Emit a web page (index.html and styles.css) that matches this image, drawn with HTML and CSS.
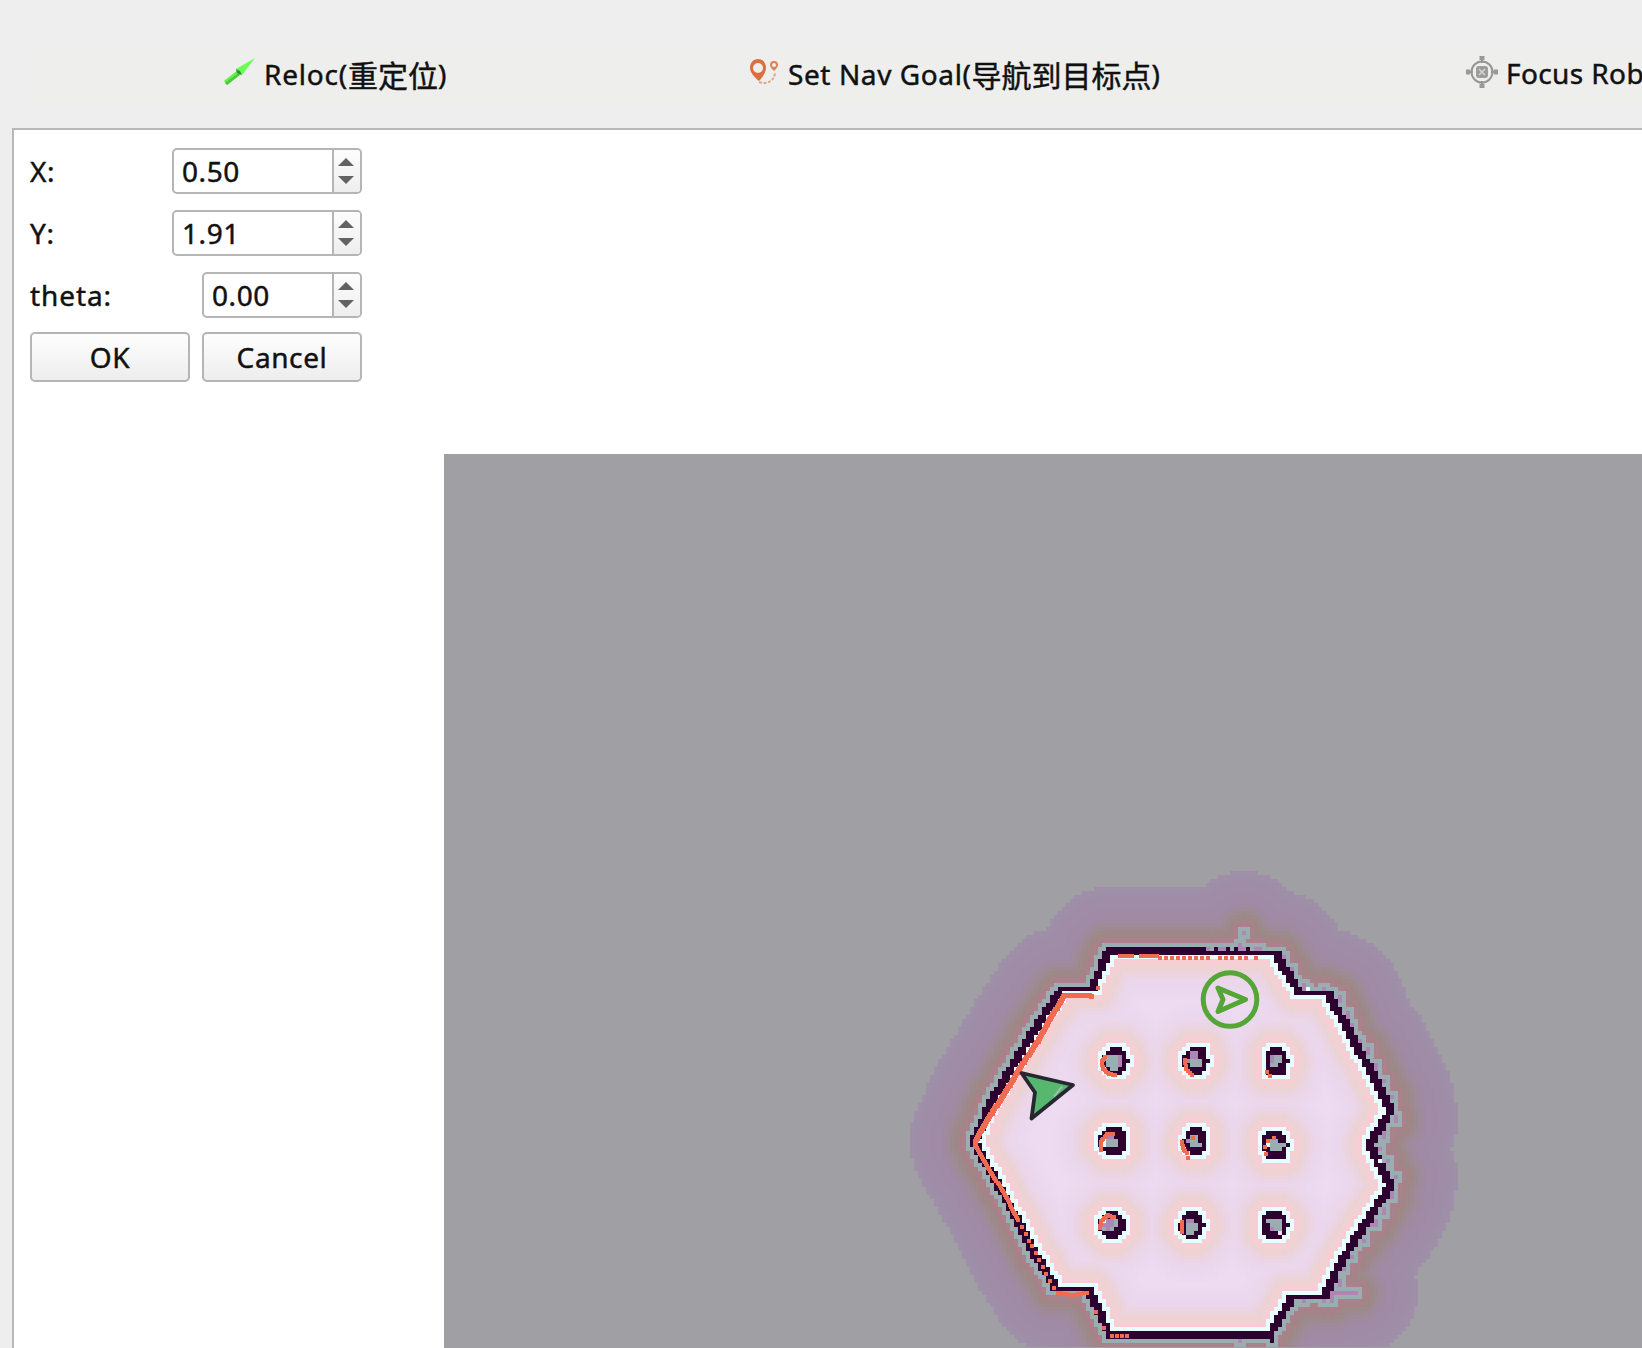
FILE: index.html
```html
<!DOCTYPE html>
<html lang="en">
<head>
<meta charset="utf-8">
<title>Map view</title>
<link rel="stylesheet" href="styles.css">
</head>
<body>
<div class="window">
  <header class="toolbar">
    <button class="tool reloc">
      <svg class="icon" viewBox="0 0 32 32"><path d="M1 23 15 12 18 16 4 27Z" fill="#61ed4c"/><path d="M2 25 17 14 18 16 4 27Z" fill="#4acb3c"/><path d="M13 11 32 0 19 17Z" fill="#6aff54"/><path d="m13 11 4 2 2 4-5-2Z" fill="#368c2c"/></svg>
      <span class="label l1">Reloc(</span><span class="cjk">重定位</span><span class="label">)</span>
    </button>
    <button class="tool goal">
      <svg class="icon" viewBox="0 0 32 32"><path fill-rule="evenodd" d="M9 1C4 1 1 5 1 10c0 4 4 9 9 13 4-4 7-9 7-13 0-5-3-9-8-9Zm0 4a5 5 0 1 1 0 10A5 5 0 0 1 9 5Z" fill="#d9703f"/><path fill-rule="evenodd" d="M25 3a4 4 0 0 0-4 4c0 2 2 4 4 6 2-2 4-4 4-6a4 4 0 0 0-4-4Zm0 2a2 2 0 1 1 0 4 2 2 0 0 1 0-4Z" fill="#dc8057"/><path d="M10 24c9 3 16-2 16-10" fill="none" stroke="#e2a58c" stroke-width="2" stroke-dasharray="3 1.5"/></svg>
      <span class="label l2">Set Nav Goal(</span><span class="cjk">导航到目标点</span><span class="label">)</span>
    </button>
    <button class="tool focus">
      <svg class="icon" viewBox="0 0 32 32"><g fill="none" stroke="#969696" stroke-width="2"><circle cx="16" cy="16" r="10.5"/><path d="M16 1v6M16 25v6M1 16h6M25 16h6"/></g><path d="M13.500 0h5v4h-5zM13.500 28h5v4h-5zM0 13.500h4v5H0zM28 13.500h4v5h-4z" fill="#999"/><rect x="10" y="10" width="12" height="12" rx="3" fill="#9c9c9c"/><path d="m13 13 6 6m0-6-6 6" stroke="#d5d5d5" stroke-width="1.500"/></svg>
      <span class="label l3">Focus Rob</span>
    </button>
  </header>
  <main class="view">
    <form class="pose">
      <div class="row"><span class="name">X:</span><div class="spin"><span class="value">0.50</span><span class="steps"><i class="up"></i><i class="down"></i></span></div></div>
      <div class="row"><span class="name">Y:</span><div class="spin"><span class="value">1.91</span><span class="steps"><i class="up"></i><i class="down"></i></span></div></div>
      <div class="row"><span class="name th">theta:</span><div class="spin short"><span class="value">0.00</span><span class="steps"><i class="up"></i><i class="down"></i></span></div></div>
      <div class="buttons"><button type="button" class="btn ok">OK</button><button type="button" class="btn cancel">Cancel</button></div>
    </form>
    <div class="map">
      <canvas id="costmap" class="costmap" width="560" height="480"></canvas>
      <svg class="markers" viewBox="444 454 1198 894">
        <path d="M1021.500 1073 1073 1085 1031.500 1118.500 1035 1092.500Z" fill="#55b86e" stroke="#272731" stroke-width="3.800" stroke-linejoin="round"/>
        <path d="M1054 1096.500 1062 1086.500" stroke="#aeb7b7" stroke-width="2"/>
        <circle cx="1230" cy="999.500" r="26.800" fill="none" stroke="#54a636" stroke-width="5"/>
        <path d="M1218 988 1245.500 999.500 1218 1011.500 1223 999.500Z" fill="none" stroke="#54a636" stroke-width="5" stroke-linejoin="round"/>
      </svg>
    </div>
  </main>
</div>
<script src="costmap.js"></script>
</body>
</html>
```
FILE: styles.css
```css
* { box-sizing: border-box; }
body { margin: 0; background: #eeeeee; color: #111; font-family: "Noto Sans", "Noto Sans CJK SC", sans-serif; font-size: 28px; letter-spacing: .6px; -webkit-text-stroke: .45px #111; }
button { font: inherit; color: inherit; letter-spacing: inherit; border: 0; padding: 0; background: none; }
.window { width: 1642px; height: 1348px; overflow: hidden; display: flex; flex-direction: column; }
.toolbar { flex: none; height: 128px; padding: 48px 0 28px 30px; display: flex; }
.tool { flex: none; height: 52px; display: flex; align-items: center; background: #eeeeec; white-space: pre; line-height: 52px; }
.reloc { width: 580px; padding-left: 193px; }
.goal { width: 660px; padding-left: 139px; }
.focus { width: 600px; padding-left: 196px; }
.focus .icon { margin-right: 8px; margin-top: -4px; }
.focus .label { margin-top: -3px; letter-spacing: .4px; }
.icon { width: 32px; height: 32px; flex: none; margin-right: 7px; }
.reloc .icon { margin-right: 9px; }
.l1 { letter-spacing: .8px; }
.cjk { font-family: "Noto Sans CJK SC", sans-serif; font-size: 30px; letter-spacing: 0; }
.view { flex: 1; min-height: 0; margin-left: 12px; border: solid #b8b8b8; border-width: 2px 0 0 2px; background: #fff; display: flex; flex-direction: column; }
.pose { flex: none; height: 324px; width: 348px; padding: 18px 0 0 16px; display: flex; flex-direction: column; }
.row { height: 46px; margin-bottom: 16px; display: flex; align-items: center; justify-content: space-between; }
.row:nth-child(3) { margin-bottom: 14px; }
.spin { width: 190px; height: 46px; border: 2px solid #b5b5b5; border-radius: 5px; display: flex; background: #fff; overflow: hidden; }
.short { width: 160px; }
.value { flex: 1; padding-left: 8px; line-height: 42px; }
.steps { width: 28px; border-left: 2px solid #b5b5b5; background: linear-gradient(#fdfdfd, #eee); display: flex; flex-direction: column; align-items: center; gap: 10px; padding: 8px 2px 0 0; }
.up, .down { width: 0; height: 0; border: 8px solid transparent; border-top: 0; border-bottom: 8px solid #626262; }
.down { border-bottom: 0; border-top: 8px solid #626262; }
.name.th { letter-spacing: .9px; }
.buttons { display: flex; gap: 12px; }
.btn { width: 160px; height: 50px; border: 2px solid #b5b5b5; border-radius: 5px; background: linear-gradient(#fefefe, #ededed); line-height: 44px; }
.map { flex: none; position: relative; width: 1198px; height: 894px; margin-left: 430px; background: #a0a0a4; overflow: hidden; }
.costmap { position: absolute; left: 462px; top: 413px; image-rendering: pixelated; }
.markers { position: absolute; left: 0; top: 0; width: 1198px; height: 894px; }
```
FILE: costmap.js
```js
// Costmap layer: walls and pillars on a 4px grid, inflated by distance.
const CELL = 4, COLS = 140, ROWS = 120, OX = 907, OY = 868;
const ctx = document.getElementById('costmap').getContext('2d');
const outline = [[1111,954],[1278,954],[1302,993],[1332,996],[1347,1023],[1360,1047],[1378,1080],[1394,1111],[1373,1145],[1394,1187],[1371,1220],[1338,1273],[1329,1296],[1296,1296],[1273,1336],[1112,1334],[1092,1292],[1060,1291],[1039,1257],[1002,1187],[977,1143],[992,1109],[999,1095],[1029,1045],[1049,1013],[1064,991],[1094,991]];
const grid = new Array(COLS * ROWS).fill('');
const cx = x => Math.floor((x - OX) / CELL), cy = y => Math.floor((y - OY) / CELL);
const put = (c, r, v) => { if (c >= 0 && c < COLS && r >= 0 && r < ROWS) grid[r * COLS + c] = v; };

function line(a, b, v, thick) {
  const n = Math.ceil(Math.hypot(b[0] - a[0], b[1] - a[1]));
  for (let i = 0; i <= n; i++) {
    const c = cx(a[0] + (b[0] - a[0]) * i / n), r = cy(a[1] + (b[1] - a[1]) * i / n);
    put(c, r, v);
    if (thick) put(c - 1, r, v);
  }
}
// scanned specks on the outer side of the right-hand walls
for (let i = 1; i < 13; i++) {
  const a = outline[i], b = outline[i + 1];
  const n = Math.hypot(b[0] - a[0], b[1] - a[1]);
  const ox = (b[1] - a[1]) / n * 5, oy = -(b[0] - a[0]) / n * 5;
  for (let t = 6; t < n; t += 17) {
    const x = a[0] + (b[0] - a[0]) * t / n + ox, y = a[1] + (b[1] - a[1]) * t / n + oy;
    put(cx(x), cy(y), 'p');
    if (i % 2) put(cx(x), cy(y) + 1, 'p');
  }
}
for (const [x, y] of [[1245,935],[1240,946],[1239,1342]]) put(cx(x), cy(y), 'p');
line([1334,1295], [1357,1295], 'p');
outline.forEach((a, i) => {
  const b = outline[(i + 1) % outline.length];
  line(a, b, '#', Math.abs(b[1] - a[1]) > 5);
});
line([1109,950], [1206,950], '#');
line([1066,988], [1068,988], '#');
line([1084,988], [1096,988], '#');
for (const x of [1215,1228,1236,1250]) put(cx(x), cy(950), '#');
for (const x of [1210,1219,1223,1241,1245,1256,1260]) put(cx(x), cy(950), 'p');
line([1110,1338], [1272,1338], '#');
line([1110,1333], [1250,1333], '#');
put(cx(1273), cy(1341), '#');

const pillars = [
  [1115,1061, ['..###..','.#####.','#tttp#.','#tttp##','#tttp#.','.#tt##.','..###..']],
  [1195,1062, ['..####.','.#pp##.','##pp##.','#pttt##','##ttt#.','.#####.','..###..']],
  [1275,1063, ['..###..','.#####.','.#ptt#.','.#ptt##','.#tt##.','.#####.','.#####.']],
  [1112,1141, ['..####.','.######','##pp###','#.ttt##','#.ttt##','.######','..####.']],
  [1195,1141, ['..###..','.#####.','.#tt##.','#ptt##.','##ttt#.','.#####.','..###..']],
  [1276,1145, ['.####..','######.','##tt##.','#.tttt#','##ttt#.','.#####.','.#####.']],
  [1111,1224, ['..###..','.#####.','#.ppt##','#pppt##','#tpt###','.#####.','..###..']],
  [1194,1224, ['..###..','.#####.','.#pp##.','##ttt##','##ttt#.','.#tt##.','..###..']],
  [1276,1227, ['.####..','######.','#tttt#.','##ttt##','##ptt#.','####w#.','.####..']]
];
for (const [x, y, rows] of pillars)
  rows.forEach((row, r) => [...row].forEach((v, c) => { if (v !== '.') put(cx(x) - 3 + c, cy(y) - 3 + r, v); }));

function inside(x, y) {
  let hit = false;
  for (let i = 0, j = outline.length - 1; i < outline.length; j = i++) {
    const [xi, yi] = outline[i], [xj, yj] = outline[j];
    if ((yi > y) !== (yj > y) && x < (xj - xi) * (y - yi) / (yj - yi) + xi) hit = !hit;
  }
  return hit;
}
const INNER = [[1.5,[249,204,211]],[2.5,[246,207,213]],[4.2,[236,211,211]],[5.5,[235,212,226]],[7.5,[235,215,236]],[12,[237,219,242]]];
const OUTER = [[1.5,[174,128,140]],[2.6,[168,130,138]],[4.2,[156,137,134]],[6,[159,138,154]],[8,[160,138,165]],[15.5,[159,143,168]]];
function ramp(stops, d) {
  let k = 0;
  while (k < stops.length - 2 && d > stops[k + 1][0]) k++;
  const [d0, a] = stops[k], [d1, b] = stops[k + 1];
  const t = Math.max(0, Math.min(1, (d - d0) / (d1 - d0)));
  return `rgb(${a.map((v, i) => Math.round(v + (b[i] - v) * t)).join(',')})`;
}
const obstacles = [];
grid.forEach((v, i) => { if (v === '#' || v === 'p') obstacles.push([i % COLS, Math.floor(i / COLS)]); });
const solid = { '#': '#2d0030', p: '#ad86b5', t: '#9aadb0', w: '#f6dcfa' };
for (let r = 0; r < ROWS; r++) for (let c = 0; c < COLS; c++) {
  const v = grid[r * COLS + c];
  let color = solid[v];
  if (!color) {
    let best = 1e9;
    for (const o of obstacles) { const q = (o[0] - c) ** 2 + (o[1] - r) ** 2; if (q < best) best = q; }
    const d = Math.sqrt(best);
    const free = inside(OX + (c + .5) * CELL, OY + (r + .5) * CELL);
    if (d > 15.5 && !free) continue;
    if (d < 1.5) color = free ? '#e8ffff' : '#9aadb0';
    else color = ramp(free ? INNER : OUTER, d);
  }
  ctx.fillStyle = color;
  ctx.fillRect(c * CELL, r * CELL, CELL, CELL);
}
for (const [x, y] of [[1309,989],[1381,1161]]) {
  ctx.fillStyle = '#eeffff';
  ctx.fillRect(cx(x) * CELL, cy(y) * CELL, CELL, CELL);
}

// laser returns
ctx.fillStyle = '#f06c50';
const dot = (x, y, w = 4) => ctx.fillRect(Math.round(x - OX - w / 2 + 1), Math.round(y - OY - w / 2 + 1), w, w);
function trace(pts, step, w) {
  for (let i = 0; i + 1 < pts.length; i++) {
    const [a, b] = [pts[i], pts[i + 1]], n = Math.hypot(b[0] - a[0], b[1] - a[1]);
    for (let t = 0; t <= n; t += step) dot(a[0] + (b[0] - a[0]) * t / n, a[1] + (b[1] - a[1]) * t / n, w);
  }
}
trace([[1120,956],[1133,956]], 2, 4);
trace([[1141,956],[1158,956]], 2, 4);
trace([[1160,958],[1213,958]], 6, 4);
for (const x of [1220,1226,1232,1240,1246,1256]) dot(x, 958);
trace([[1091,996],[1064,995],[1057,1008],[1047,1024],[1038,1041],[1024,1062],[1010,1085],[992,1113],[977,1138],[975,1145]], 2, 5);
trace([[975,1145],[990,1171],[1004,1193],[1018,1220]], 2, 4);
trace([[1018,1220],[1032,1246],[1046,1274],[1056,1290]], 8, 4);
trace([[1058,1293],[1072,1295],[1087,1293]], 3, 4);
for (const [x, y] of [[1096,1312],[1104,1328],[1098,988]]) dot(x, y);
trace([[1112,1336],[1131,1336]], 5, 4);
trace([[1105,1057],[1102,1061],[1103,1069],[1109,1074],[1115,1075]], 2, 4);
trace([[1185,1060],[1186,1069],[1193,1076]], 3, 4);
dot(1267, 1072); dot(1270, 1076);
trace([[1101,1150],[1101,1142],[1107,1134],[1113,1134]], 2, 4);
trace([[1182,1142],[1183,1148],[1187,1153]], 2, 4); dot(1188, 1158); dot(1193, 1138);
for (const [x, y] of [[1274,1138],[1268,1141],[1265,1147],[1266,1154]]) dot(x, y);
trace([[1100,1228],[1101,1221],[1108,1215],[1115,1218]], 2, 4);
trace([[1182,1222],[1182,1233]], 2, 4);
```
